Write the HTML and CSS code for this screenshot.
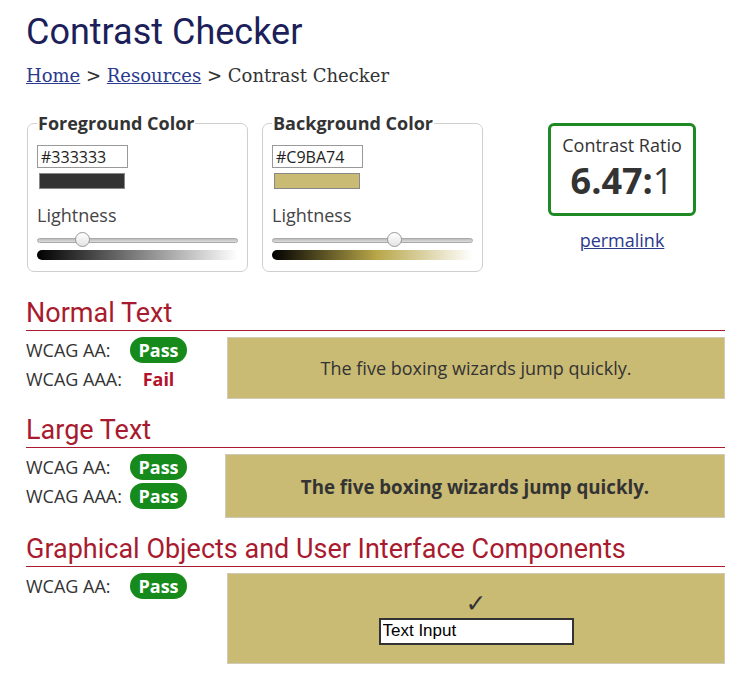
FILE: index.html
```html
<!DOCTYPE html>
<html lang="en">
<head>
<meta charset="utf-8">
<title>Contrast Checker</title>
<link rel="stylesheet" href="styles.css">
</head>
<body>
<main class="page">
  <h1 class="title">Contrast Checker</h1>
  <nav class="crumbs"><a href="#">Home</a> &gt; <a href="#">Resources</a> &gt; Contrast Checker</nav>

  <div class="top">
    <fieldset class="picker">
      <legend>Foreground Color</legend>
      <input class="hex" type="text" value="#333333">
      <div class="swatch" style="background:#333333"></div>
      <div class="light-label">Lightness</div>
      <div class="track"><span class="thumb" style="left:22%"></span></div>
      <div class="grad grad-fg"></div>
    </fieldset>
    <fieldset class="picker">
      <legend>Background Color</legend>
      <input class="hex" type="text" value="#C9BA74">
      <div class="swatch" style="background:#C9BA74"></div>
      <div class="light-label">Lightness</div>
      <div class="track"><span class="thumb" style="left:61%"></span></div>
      <div class="grad grad-bg"></div>
    </fieldset>
    <div class="ratio-col">
      <div class="ratio-box">
        <div class="ratio-label">Contrast Ratio</div>
        <div class="ratio-value"><b>6.47:</b>1</div>
      </div>
      <a class="permalink" href="#">permalink</a>
    </div>
  </div>

  <section class="block">
    <h2>Normal Text</h2>
    <div class="block-body">
      <div class="results">
        <span class="lbl">WCAG AA:</span><span class="res"><span class="pass">Pass</span></span>
        <span class="lbl">WCAG AAA:</span><span class="res"><span class="fail">Fail</span></span>
      </div>
      <div class="sample sample-normal">The five boxing wizards jump quickly.</div>
    </div>
  </section>

  <section class="block">
    <h2>Large Text</h2>
    <div class="block-body">
      <div class="results">
        <span class="lbl">WCAG AA:</span><span class="res"><span class="pass">Pass</span></span>
        <span class="lbl">WCAG AAA:</span><span class="res"><span class="pass">Pass</span></span>
      </div>
      <div class="sample sample-large">The five boxing wizards jump quickly.</div>
    </div>
  </section>

  <section class="block">
    <h2>Graphical Objects and User Interface Components</h2>
    <div class="block-body">
      <div class="results">
        <span class="lbl">WCAG AA:</span><span class="res"><span class="pass">Pass</span></span>
      </div>
      <div class="sample sample-ui">
        <span class="check">&#10003;</span>
        <input class="ui-input" type="text" value="Text Input" readonly>
      </div>
    </div>
  </section>
</main>
</body>
</html>
```

FILE: styles.css
```css
* { box-sizing: border-box; }
body {
  margin: 0;
  background: #fff;
  color: #333;
  font-family: "Open Sans", "Noto Sans", sans-serif;
  font-size: 18px;
}
.page {
  padding: 11px 16px 0 26px;
  width: 741px;
}
.title {
  margin: 0;
  font-family: Roboto, sans-serif;
  font-weight: 400;
  font-size: 36px;
  line-height: 42px;
  color: #1c1f5a;
}
.crumbs {
  margin-top: 12px;
  font-family: "DejaVu Serif", serif;
  font-size: 18px;
  line-height: 22px;
  color: #333;
}
.crumbs a { color: #2a3a8c; }

.top {
  display: flex;
  align-items: flex-start;
  margin-top: 24px;
  padding-left: 1px;
}
.picker {
  width: 221px;
  margin: 0 14px 0 0;
  padding: 10px 9px 11px 9px;
  border: 1px solid #cfcfcf;
  border-radius: 7px;
}
.picker legend {
  padding: 0 1px;
  font-weight: 700;
  font-size: 18px;
  line-height: 24px;
  color: #333;
}
.hex {
  display: block;
  width: 91px;
  height: 23px;
  padding: 0 3px;
  border: 1px solid #999;
  font-family: "Open Sans", sans-serif;
  font-size: 16px;
  color: #222;
  background: #fff;
}
.swatch {
  width: 86px;
  height: 16px;
  margin: 5px 0 0 2px;
  border: 1px solid #888;
}
.light-label {
  margin-top: 14px;
  font-size: 18px;
  line-height: 24px;
  color: #444;
}
.track {
  position: relative;
  margin-top: 11px;
  height: 5px;
  border: 1px solid #aaa;
  border-radius: 3px;
  background: linear-gradient(#bbb, #ddd);
}
.thumb {
  position: absolute;
  top: -7px;
  width: 15px;
  height: 15px;
  margin-left: -7px;
  border: 1px solid #999;
  border-radius: 50%;
  background: linear-gradient(#fff, #e4e4e4);
}
.grad {
  margin-top: 7px;
  height: 10px;
  border-radius: 5px 0 0 5px;
}
.grad-fg { background: linear-gradient(to right, #000, #808080 50%, #fff); }
.grad-bg { background: linear-gradient(to right, #000, #b8a649 52%, #fff); }

.ratio-col {
  margin: 12px 0 0 51px;
  width: 148px;
  display: flex;
  flex-direction: column;
  align-items: center;
}
.ratio-box {
  width: 148px;
  height: 93px;
  border: 3px solid #1f8a24;
  border-radius: 6px;
  text-align: center;
  padding-top: 7px;
}
.ratio-label {
  font-size: 18px;
  line-height: 24px;
  color: #333;
}
.ratio-value {
  margin-top: 4px;
  font-size: 36px;
  line-height: 40px;
  color: #333;
}
.ratio-value b { font-weight: 700; }
.permalink {
  margin-top: 12px;
  color: #2a3a8c;
  font-size: 18px;
  line-height: 24px;
}

.block h2 {
  margin: 0;
  font-family: Roboto, sans-serif;
  font-weight: 400;
  font-size: 27px;
  line-height: 32px;
  color: #a81b2f;
  border-bottom: 1px solid #a81b2f;
  padding-bottom: 1px;
}
.block:first-of-type { margin-top: 25px; }
.block + .block { margin-top: 15px; }
.block-body {
  display: flex;
  align-items: flex-start;
  margin-top: 6px;
}
.results {
  width: 201px;
  flex: none;
  display: grid;
  grid-template-columns: 104px 57px;
  row-gap: 3px;
  align-items: center;
}
.lbl {
  font-size: 18px;
  line-height: 26px;
  color: #333;
}
.res { text-align: center; line-height: 26px; }
.pass {
  display: inline-block;
  width: 57px;
  height: 26px;
  border-radius: 13px;
  background: #168a1b;
  color: #fff;
  font-weight: 700;
  font-size: 18px;
  line-height: 26px;
  text-align: center;
}
.fail {
  color: #b3122a;
  font-weight: 700;
  font-size: 18px;
}
.sample {
  flex: 1;
  background: #c9ba74;
  border: 1px solid #cfcbb8;
  color: #333;
  display: flex;
  align-items: center;
  justify-content: center;
}
.sample-normal { height: 62px; font-size: 18px; }
.sample-large { height: 64px; font-size: 18.7px; font-weight: 700; margin-left: -2px; }
.sample-ui {
  height: 91px;
  flex-direction: column;
}
.check {
  font-family: "DejaVu Sans", sans-serif;
  font-size: 25px;
  line-height: 22px;
  color: #333;
}
.ui-input {
  width: 195px;
  height: 27px;
  margin-top: 3px;
  border: 2px solid #333;
  padding: 0 2px;
  background: #fff;
  color: #000;
  font-family: "Liberation Sans", Arial, sans-serif;
  font-size: 17px;
}
```
